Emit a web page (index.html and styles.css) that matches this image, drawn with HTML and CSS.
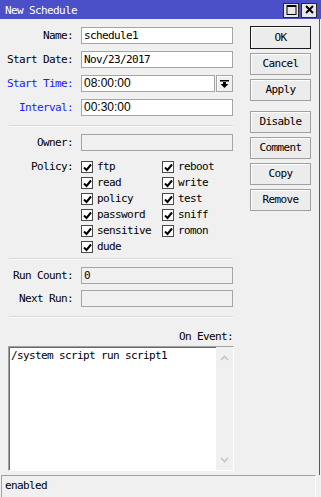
FILE: index.html
```html
<!DOCTYPE html>
<html>
<head>
<meta charset="utf-8">
<link rel="stylesheet" href="styles.css">
</head>
<body>
<div class="win">
  <div class="titlebar">
    <span class="title-text">New Schedule</span>
    <div class="tbtns">
      <span class="tb"><svg width="13" height="12" viewBox="0 0 13 12"><rect x="2" y="1.5" width="9" height="9" fill="none" stroke="#000" stroke-width="1"/><rect x="2" y="1" width="9" height="2" fill="#000"/></svg></span>
      <span class="tb"><svg width="13" height="12" viewBox="0 0 13 12"><path d="M3 2 L10 9 M10 2 L3 9" stroke="#000" stroke-width="2" fill="none"/></svg></span>
    </div>
  </div>
  <div class="body">
    <div class="main">
      <div class="form">
        <label class="lbl">Name:</label><div class="inp">schedule1</div>
        <label class="lbl">Start Date:</label><div class="inp">Nov/23/2017</div>
        <label class="lbl blue">Start Time:</label>
        <div class="combo"><div class="inp sans">08:00:00</div><div class="dd"><svg width="9" height="9" viewBox="0 0 9 9"><rect x="0" y="1" width="9" height="1.5" fill="#000"/><rect x="3" y="3" width="3" height="2" fill="#000"/><path d="M0.5 5 L8.5 5 L4.5 9 Z" fill="#000"/></svg></div></div>
        <label class="lbl blue">Interval:</label><div class="inp sans">00:30:00</div>
      </div>
      <div class="sep"></div>
      <div class="form">
        <label class="lbl">Owner:</label><div class="inp ro"></div>
      </div>
      <div class="form policy">
        <label class="lbl">Policy:</label>
        <div class="checks">
          <div class="chk"><span class="box"><svg width="9" height="9" viewBox="0 0 9 9"><path d="M1 4.5 L3.5 7 L8 1.5" stroke="#000" stroke-width="2" fill="none"/></svg></span>ftp</div>
          <div class="chk"><span class="box"><svg width="9" height="9" viewBox="0 0 9 9"><path d="M1 4.5 L3.5 7 L8 1.5" stroke="#000" stroke-width="2" fill="none"/></svg></span>reboot</div>
          <div class="chk"><span class="box"><svg width="9" height="9" viewBox="0 0 9 9"><path d="M1 4.5 L3.5 7 L8 1.5" stroke="#000" stroke-width="2" fill="none"/></svg></span>read</div>
          <div class="chk"><span class="box"><svg width="9" height="9" viewBox="0 0 9 9"><path d="M1 4.5 L3.5 7 L8 1.5" stroke="#000" stroke-width="2" fill="none"/></svg></span>write</div>
          <div class="chk"><span class="box"><svg width="9" height="9" viewBox="0 0 9 9"><path d="M1 4.5 L3.5 7 L8 1.5" stroke="#000" stroke-width="2" fill="none"/></svg></span>policy</div>
          <div class="chk"><span class="box"><svg width="9" height="9" viewBox="0 0 9 9"><path d="M1 4.5 L3.5 7 L8 1.5" stroke="#000" stroke-width="2" fill="none"/></svg></span>test</div>
          <div class="chk"><span class="box"><svg width="9" height="9" viewBox="0 0 9 9"><path d="M1 4.5 L3.5 7 L8 1.5" stroke="#000" stroke-width="2" fill="none"/></svg></span>password</div>
          <div class="chk"><span class="box"><svg width="9" height="9" viewBox="0 0 9 9"><path d="M1 4.5 L3.5 7 L8 1.5" stroke="#000" stroke-width="2" fill="none"/></svg></span>sniff</div>
          <div class="chk"><span class="box"><svg width="9" height="9" viewBox="0 0 9 9"><path d="M1 4.5 L3.5 7 L8 1.5" stroke="#000" stroke-width="2" fill="none"/></svg></span>sensitive</div>
          <div class="chk"><span class="box"><svg width="9" height="9" viewBox="0 0 9 9"><path d="M1 4.5 L3.5 7 L8 1.5" stroke="#000" stroke-width="2" fill="none"/></svg></span>romon</div>
          <div class="chk"><span class="box"><svg width="9" height="9" viewBox="0 0 9 9"><path d="M1 4.5 L3.5 7 L8 1.5" stroke="#000" stroke-width="2" fill="none"/></svg></span>dude</div>
        </div>
      </div>
      <div class="sep sep-tight"></div>
      <div class="form run">
        <label class="lbl">Run Count:</label><div class="inp ro">0</div>
        <label class="lbl">Next Run:</label><div class="inp ro"></div>
      </div>
      <div class="sep"></div>
      <div class="event-lbl">On Event:</div>
      <div class="textarea">
        <div class="ta-text">/system script run script1</div>
        <div class="ta-scroll">
          <svg width="9" height="6" viewBox="0 0 9 6"><path d="M1 5 L4.5 1.5 L8 5" stroke="#c4c4c4" stroke-width="1.6" fill="none"/></svg>
          <svg width="9" height="6" viewBox="0 0 9 6"><path d="M1 1 L4.5 4.5 L8 1" stroke="#c4c4c4" stroke-width="1.6" fill="none"/></svg>
        </div>
      </div>
    </div>
    <div class="btns">
      <div class="btn default">OK</div>
      <div class="btn">Cancel</div>
      <div class="btn">Apply</div>
      <div class="btn gap">Disable</div>
      <div class="btn">Comment</div>
      <div class="btn">Copy</div>
      <div class="btn">Remove</div>
    </div>
  </div>
  <div class="status"><div class="status-cell">enabled</div></div>
</div>
</body>
</html>
```
FILE: styles.css
```css
* { box-sizing: border-box; }
html, body {
  margin: 0;
  padding: 0;
  background: #f0f0f0;
}
body {
  font-family: "DejaVu Sans Mono", "Liberation Mono", monospace;
  font-size: 11px;
  letter-spacing: -0.62px;
  color: #000;
}
.win {
  width: 321px;
  height: 497px;
  display: flex;
  flex-direction: column;
  background: #f0f0f0;
}
.titlebar {
  height: 19px;
  background: #4b50c8;
  display: flex;
  align-items: center;
  justify-content: space-between;
  padding: 0 4px 0 5px;
}
.title-text {
  color: #fff;
  line-height: 19px;
  padding-top: 1px;
}
.tbtns {
  display: flex;
  gap: 2px;
  padding-top: 1px;
}
.tb {
  width: 16px;
  height: 15px;
  background: #e8e8e8;
  border: 1px solid #2a2a2a;
  display: flex;
  align-items: center;
  justify-content: center;
}
.body {
  flex: 1;
  display: flex;
  border-right: 1px solid #5a5a5a;
  margin-right: 1px;
}
.main {
  width: 242px;
  padding-top: 8px;
  display: flex;
  flex-direction: column;
}
.form {
  display: grid;
  grid-template-columns: 73px 152px;
  column-gap: 8px;
  row-gap: 7px;
  align-items: center;
}
.lbl {
  text-align: right;
  white-space: nowrap;
  line-height: 17px;
}
.blue { color: #1a1aff; }
.inp {
  height: 17px;
  border: 1px solid #a5a5a5;
  background: #fff;
  padding-left: 2px;
  line-height: 15px;
  white-space: nowrap;
  overflow: hidden;
}
.inp.ro { background: #f0f0f0; }
.sans {
  font-family: "Liberation Sans", Arial, sans-serif;
  font-size: 12px;
  letter-spacing: 0;
}
.combo {
  display: flex;
  gap: 1px;
}
.combo .inp { flex: 1; }
.dd {
  width: 17px;
  height: 17px;
  border: 1px solid #a5a5a5;
  background: #f0f0f0;
  box-shadow: inset 1px 1px #fff;
  display: flex;
  align-items: center;
  justify-content: center;
}
.sep {
  margin: 9px 0 7px 9px;
  width: 224px;
  height: 2px;
  border-top: 1px solid #d9d9d9;
  border-bottom: 1px solid #fbfbfb;
}
.sep-tight { margin-top: 3px; }
.policy {
  margin-top: 8px;
  align-items: start;
}
.policy .lbl { line-height: 16px; }
.checks {
  display: grid;
  grid-template-columns: 81px auto;
  grid-auto-rows: 16px;
}
.chk {
  display: flex;
  align-items: center;
  gap: 4px;
  line-height: 16px;
  white-space: nowrap;
}
.box {
  width: 12px;
  height: 12px;
  border: 1px solid #4a4a4a;
  background: #fff;
  display: flex;
  align-items: center;
  justify-content: center;
  flex: none;
}
.run { row-gap: 6px; }
.event-lbl {
  width: 233px;
  text-align: right;
  line-height: 13px;
  margin-top: 5px;
}
.textarea {
  margin: 3px 0 0 8px;
  width: 226px;
  height: 125px;
  border: 1px solid;
  border-color: #a0a0a0 #fff #fff #a0a0a0;
  box-shadow: inset 1px 1px #696969;
  background: #fff;
  display: flex;
}
.ta-text {
  flex: 1;
  padding: 2px 0 0 2px;
  line-height: 13px;
  white-space: nowrap;
}
.ta-scroll {
  width: 17px;
  background: #f0f0f0;
  display: flex;
  flex-direction: column;
  justify-content: space-between;
  align-items: center;
  padding: 8px 0 7px;
}
.btns {
  padding: 7px 0 0 8px;
  display: flex;
  flex-direction: column;
  gap: 4px;
}
.btn {
  width: 61px;
  height: 22px;
  border: 1px solid #a0a0a0;
  box-shadow: inset 1px 1px #fff;
  background: #ececec;
  text-align: center;
  line-height: 20px;
}
.btn.default {
  border-color: #1a1a1a;
  height: 23px;
  line-height: 21px;
}
.btn.gap { margin-top: 6px; }
.status {
  height: 22px;
  padding: 0 5px 0 1px;
}
.status-cell {
  height: 22px;
  border-top: 1px solid #a0a0a0;
  border-left: 1px solid #a0a0a0;
  border-right: 1px solid #fff;
  padding-left: 3px;
  line-height: 20px;
}
```
